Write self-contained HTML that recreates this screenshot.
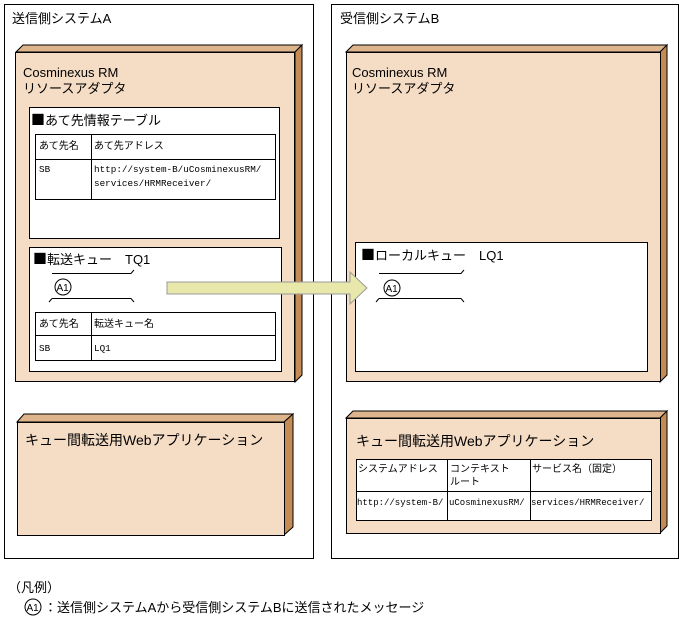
<!DOCTYPE html>
<html><head><meta charset="utf-8"><style>
html,body{margin:0;padding:0;background:#fff;}
svg{display:block;}
text{font-family:"Liberation Sans","Noto Sans CJK JP",sans-serif;fill:#000;}
.t{font-size:13px;}
.s{font-size:10px;}
.m{font-family:"Liberation Mono","Noto Sans CJK JP",monospace;font-size:9.3px;}
.sq{font-family:"Noto Sans CJK JP",sans-serif;font-size:14px;}
</style></head><body>
<svg width="682" height="623" viewBox="0 0 682 623" xmlns="http://www.w3.org/2000/svg">
<g fill="none" stroke="#000" stroke-width="1">
<rect x="4.5" y="4.5" width="309" height="554"/>
<rect x="331.5" y="4.5" width="347" height="554"/>
</g>
<text class="t" x="12" y="23">送信側システムA</text>
<text class="t" x="340" y="23">受信側システムB</text>

<!-- left RM node -->
<polygon points="16,52 23,45 302,45 295,52" fill="#deb48c" stroke="#000"/>
<polygon points="295,52 302,45 302,375 295,382" fill="#c58b55" stroke="#000"/>
<rect x="15.5" y="52.5" width="279" height="329" fill="#f5dcc5" stroke="#000"/>
<text class="t" x="23" y="77">Cosminexus RM</text>
<text class="t" x="23" y="93">リソースアダプタ</text>

<rect x="29.5" y="107.5" width="250" height="131" fill="#fff" stroke="#000"/>
<text class="t" x="31" y="125"><tspan class="sq">■</tspan>あて先情報テーブル</text>
<rect x="35.5" y="134.5" width="240" height="65" fill="#fff" stroke="#000"/>
<line x1="35" y1="159.5" x2="276" y2="159.5" stroke="#000"/>
<line x1="91.5" y1="134" x2="91.5" y2="200" stroke="#000"/>
<text class="s" x="39" y="149">あて先名</text>
<text class="s" x="94" y="149">あて先アドレス</text>
<text class="m" x="39" y="172">SB</text>
<text class="m" x="94" y="172">http://system-B/uCosminexusRM/</text>
<text class="m" x="94" y="186">services/HRMReceiver/</text>

<rect x="29.5" y="247.5" width="252" height="124" fill="#fff" stroke="#000"/>
<text class="t" x="33" y="264"><tspan class="sq">■</tspan>転送キュー　TQ1</text>
<path d="M52,273.5 H131 L134,270 M52,298.5 H131 L134,302 M52,298.5 L49,302" fill="none" stroke="#000"/>
<circle cx="63" cy="287" r="8" fill="#fff" stroke="#000"/>
<text x="56.5" y="291" style="font-size:10px">A1</text>
<rect x="35.5" y="312.5" width="240" height="48" fill="#fff" stroke="#000"/>
<line x1="35" y1="335.5" x2="276" y2="335.5" stroke="#000"/>
<line x1="91.5" y1="312" x2="91.5" y2="361" stroke="#000"/>
<text class="s" x="39" y="327">あて先名</text>
<text class="s" x="94" y="327">転送キュー名</text>
<text class="m" x="39" y="351">SB</text>
<text class="m" x="94" y="351">LQ1</text>

<!-- left web app -->
<polygon points="17,422 24,414 293,414 284,422" fill="#deb48c" stroke="#000"/>
<polygon points="284,422 293,414 293,527 284,535" fill="#c58b55" stroke="#000"/>
<rect x="17.5" y="422.5" width="267" height="113" fill="#f5dcc5" stroke="#000"/>
<text class="t" x="25" y="445" style="font-size:14px">キュー間転送用Webアプリケーション</text>

<!-- right RM node -->
<polygon points="346,52 353,45 667,45 660,52" fill="#deb48c" stroke="#000"/>
<polygon points="660,52 667,45 667,375 660,382" fill="#c58b55" stroke="#000"/>
<rect x="346.5" y="52.5" width="314" height="329" fill="#f5dcc5" stroke="#000"/>
<text class="t" x="352" y="77">Cosminexus RM</text>
<text class="t" x="352" y="93">リソースアダプタ</text>

<rect x="355.5" y="242.5" width="292" height="129" fill="#fff" stroke="#000"/>
<text class="t" x="361" y="260"><tspan class="sq">■</tspan>ローカルキュー　LQ1</text>
<path d="M379,273.5 H461 L464,270 M379,298.5 H461 L464,302 M379,298.5 L376,302" fill="none" stroke="#000"/>
<circle cx="392" cy="288" r="8" fill="#fff" stroke="#000"/>
<text x="385.5" y="292" style="font-size:10px">A1</text>

<!-- right web app -->
<polygon points="346,418 353,411 667,411 660,418" fill="#deb48c" stroke="#000"/>
<polygon points="660,418 667,411 667,526 660,533" fill="#c58b55" stroke="#000"/>
<rect x="346.5" y="418.5" width="314" height="115" fill="#f5dcc5" stroke="#000"/>
<text class="t" x="356" y="446" style="font-size:14px">キュー間転送用Webアプリケーション</text>
<rect x="356.5" y="459.5" width="295" height="61" fill="#fff" stroke="#000"/>
<line x1="356" y1="491.5" x2="652" y2="491.5" stroke="#000"/>
<line x1="447.5" y1="459" x2="447.5" y2="521" stroke="#000"/>
<line x1="530.5" y1="459" x2="530.5" y2="521" stroke="#000"/>
<text class="s" x="358" y="472">システムアドレス</text>
<text class="s" x="450" y="472">コンテキスト</text>
<text class="s" x="450" y="485">ルート</text>
<text class="s" x="532" y="472">サービス名（固定）</text>
<text class="m" x="357" y="505" style="font-size:9px">http://system-B/</text>
<text class="m" x="449" y="505" style="font-size:9px">uCosminexusRM/</text>
<text class="m" x="531" y="505" style="font-size:9px">services/HRMReceiver/</text>

<!-- arrow -->
<polygon points="167,282 350,282 350,272 367,288 350,304 350,294 167,294" fill="#e8e8aa" stroke="#999" stroke-width="1"/>

<!-- legend -->
<text class="t" x="8" y="592">（凡例）</text>
<circle cx="33" cy="607" r="8" fill="#fff" stroke="#000"/>
<text x="26.5" y="611" style="font-size:10px">A1</text>
<text class="t" x="44" y="612">：送信側システムAから受信側システムBに送信されたメッセージ</text>
</svg>
</body></html>
